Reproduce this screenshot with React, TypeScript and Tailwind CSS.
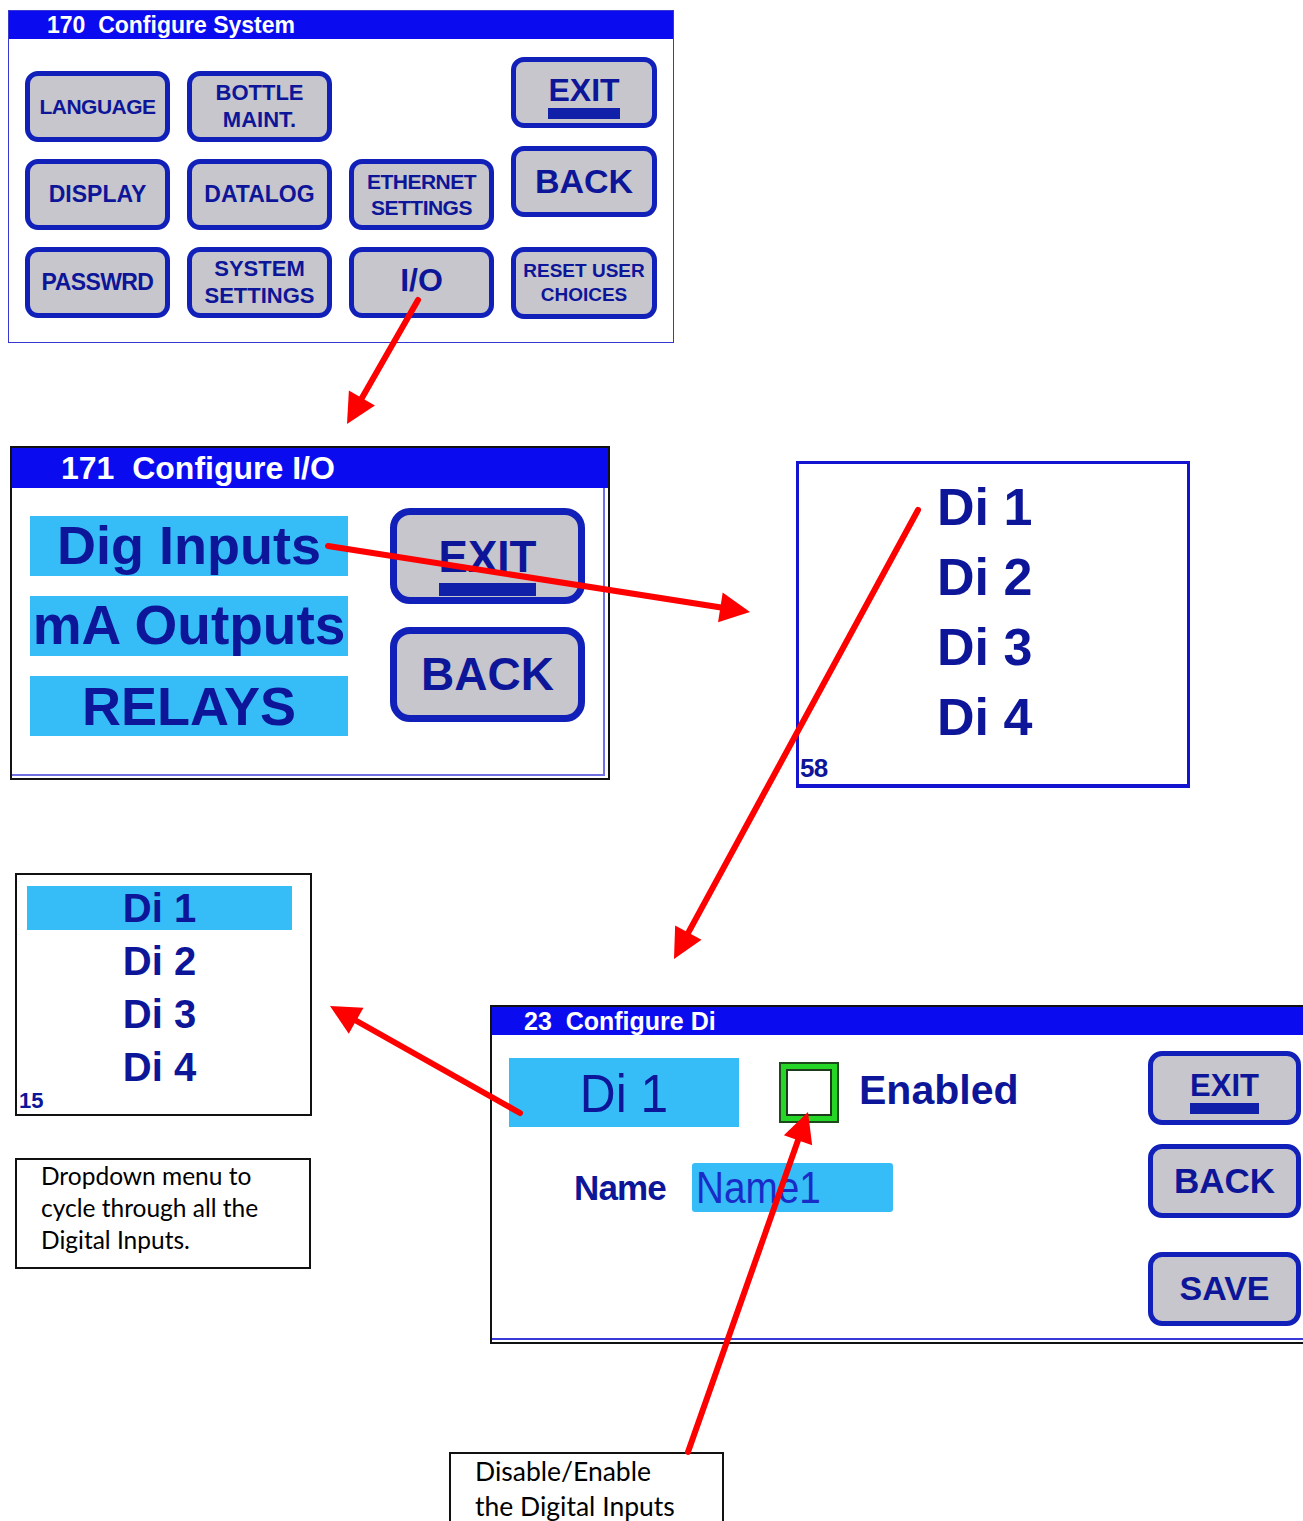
import React from "react";

const TEXT = "text-[#0d1598]";

function LcdButton({
  children,
  className = "",
}: {
  children: React.ReactNode;
  className?: string;
}) {
  return (
    <div
      className={`flex items-center justify-center border-[5px] border-[#1020b8] bg-[#c6c6cc] font-bold leading-[1.22] text-center ${TEXT} ${className}`}
    >
      {children}
    </div>
  );
}

function ExitLabel({ bar, gap = "mt-[3px]" }: { bar: string; gap?: string }) {
  return (
    <div className="flex flex-col items-center leading-none">
      <span>EXIT</span>
      <span className={`${gap} ${bar} w-full bg-[#1020a8]`} />
    </div>
  );
}

function Arrow({ x1, y1, x2, y2 }: { x1: number; y1: number; x2: number; y2: number }) {
  const dx = x2 - x1;
  const dy = y2 - y1;
  const len = Math.hypot(dx, dy);
  const ux = dx / len;
  const uy = dy / len;
  const hl = 30;
  const hw = 15;
  const bx = x2 - ux * hl;
  const by = y2 - uy * hl;
  const px = -uy * hw;
  const py = ux * hw;
  return (
    <g>
      <line
        x1={x1}
        y1={y1}
        x2={bx + ux * 4}
        y2={by + uy * 4}
        stroke="#ff0000"
        strokeWidth={6}
        strokeLinecap="round"
      />
      <polygon
        points={`${x2},${y2} ${bx + px},${by + py} ${bx - px},${by - py}`}
        fill="#ff0000"
      />
    </g>
  );
}

// 170 Configure System
function ConfigureSystem() {
  const cell = "h-[71px] w-[145px] rounded-[13px]";
  return (
    <div className="absolute left-[8px] top-[10px] h-[333px] w-[666px] border border-[#3838d0] bg-white">
      <div className="flex h-[28px] items-center bg-[#0b0bf0] pl-[38px] text-[23px] font-bold leading-none text-white">
        170&nbsp;&nbsp;Configure System
      </div>
      <div className="flex gap-[17px] pl-[16px]">
        <div className="flex flex-col gap-[17px] pt-[32px]">
          <LcdButton className={`${cell} text-[21px] tracking-tight`}>LANGUAGE</LcdButton>
          <LcdButton className={`${cell} text-[23px]`}>DISPLAY</LcdButton>
          <LcdButton className={`${cell} text-[23px] tracking-tight`}>PASSWRD</LcdButton>
        </div>
        <div className="flex flex-col gap-[17px] pt-[32px]">
          <LcdButton className={`${cell} text-[22px]`}>
            BOTTLE
            <br />
            MAINT.
          </LcdButton>
          <LcdButton className={`${cell} text-[23px]`}>DATALOG</LcdButton>
          <LcdButton className={`${cell} text-[22px]`}>
            SYSTEM
            <br />
            SETTINGS
          </LcdButton>
        </div>
        <div className="flex flex-col gap-[17px] pt-[32px]">
          <div className="h-[71px] w-[145px]" />
          <LcdButton className={`${cell} text-[21px] leading-[1.2] tracking-tight`}>
            ETHERNET
            <br />
            SETTINGS
          </LcdButton>
          <LcdButton className={`${cell} pb-[4px] text-[32px]`}>I/O</LcdButton>
        </div>
        <div className="flex flex-col pt-[18px]">
          <LcdButton className="h-[71px] w-[146px] rounded-[13px] pt-[8px] text-[32px]">
            <ExitLabel bar="h-[11px]" gap="mt-[2px]" />
          </LcdButton>
          <LcdButton className="mt-[18px] h-[71px] w-[146px] rounded-[13px] text-[34px]">
            BACK
          </LcdButton>
          <LcdButton className="mt-[30px] h-[72px] w-[146px] rounded-[13px] text-[19px] leading-[1.25]">
            RESET USER
            <br />
            CHOICES
          </LcdButton>
        </div>
      </div>
    </div>
  );
}

// 171 Configure I/O
function ConfigureIO() {
  const item = `flex h-[60px] w-[318px] items-center justify-center bg-[#36bdf7] text-[54px] font-bold leading-none ${TEXT}`;
  return (
    <div className="absolute left-[10px] top-[446px] h-[334px] w-[600px] border-2 border-[#111] bg-white">
      <div className="flex h-[40px] items-center bg-[#0b0bf0] pl-[49px] text-[32px] font-bold leading-none text-white">
        171&nbsp;&nbsp;Configure I/O
      </div>
      <div className="flex gap-[42px] pl-[18px] pt-[28px]">
        <div className="flex flex-col gap-[20px]">
          <div className={`${item} pb-[2px]`}>Dig Inputs</div>
          <div className={`${item} pb-[2px] text-[55px]`}>mA Outputs</div>
          <div className={item}>RELAYS</div>
        </div>
        <div className="flex flex-col gap-[23px]">
          <LcdButton className="-mt-[8px] h-[96px] w-[195px] rounded-[20px] border-[7px] pt-[18px] text-[44px]">
            <ExitLabel bar="h-[13px]" gap="mt-[4px]" />
          </LcdButton>
          <LcdButton className="h-[95px] w-[195px] rounded-[20px] border-[7px] text-[46px]">
            BACK
          </LcdButton>
        </div>
      </div>
      <div className="absolute bottom-[2px] right-[3px] top-[40px] w-[2px] bg-[#7070e0]" />
      <div className="absolute bottom-[2px] left-0 right-[3px] h-[2px] bg-[#7070e0]" />
    </div>
  );
}

// 58 list
function DiList() {
  return (
    <div className="absolute left-[796px] top-[461px] h-[327px] w-[394px] border-[3px] border-b-[4px] border-[#1414d0] bg-white">
      <div className={`flex flex-col pl-[138px] pt-[8px] text-[52px] font-bold leading-[70px] ${TEXT}`}>
        <span>Di 1</span>
        <span>Di 2</span>
        <span>Di 3</span>
        <span>Di 4</span>
      </div>
      <div className={`absolute bottom-[3px] left-[1px] text-[26px] font-bold leading-none tracking-tight ${TEXT}`}>
        58
      </div>
    </div>
  );
}

// 15 dropdown
function DiDropdown() {
  const rows = ["Di 1", "Di 2", "Di 3", "Di 4"];
  return (
    <div className="absolute left-[15px] top-[873px] h-[243px] w-[297px] border-2 border-[#111] bg-white">
      <div className={`flex flex-col px-[10px] pt-[6px] text-[40px] font-bold ${TEXT}`}>
        {rows.map((r, i) => (
          <div key={r} className="flex h-[53px] items-center">
            <div
              className={`flex h-[44px] w-[265px] items-center justify-center leading-none ${
                i === 0 ? "bg-[#36bdf7]" : ""
              }`}
            >
              {r}
            </div>
          </div>
        ))}
      </div>
      <div className={`absolute bottom-[2px] left-[2px] text-[22px] font-bold leading-none ${TEXT}`}>15</div>
    </div>
  );
}

function Note({ className, children }: { className: string; children: React.ReactNode }) {
  return (
    <div
      className={`absolute border-2 border-[#111] bg-white font-['Lato','Open_Sans',sans-serif] text-black ${className}`}
    >
      {children}
    </div>
  );
}

// 23 Configure Di
function ConfigureDi() {
  const btn = "h-[74px] w-[153px] rounded-[14px]";
  return (
    <div className="absolute left-[490px] top-[1005px] h-[339px] w-[830px] border-2 border-[#111] bg-white">
      <div className="flex h-[28px] items-center bg-[#0b0bf0] pl-[32px] text-[25px] font-bold leading-none text-white">
        23&nbsp;&nbsp;Configure Di
      </div>
      <div className="flex">
        <div className="flex w-[656px] flex-col pl-[17px] pt-[23px]">
          <div className="flex items-center">
            <div
              className={`flex h-[69px] w-[230px] items-center justify-center bg-[#36bdf7] text-[54px] leading-none ${TEXT}`}
            >
              <span className="scale-x-[0.92]">Di 1</span>
            </div>
            <div className="ml-[40px] flex h-[61px] w-[60px] items-center justify-center border-2 border-[#1d4a1d] bg-[#26d626]">
              <div className="h-[47px] w-[46px] border-2 border-[#1d3a1d] bg-white" />
            </div>
            <div className={`ml-[20px] pb-[4px] text-[41px] font-bold leading-none ${TEXT}`}>Enabled</div>
          </div>
          <div className="mt-[36px] flex items-center pl-[65px]">
            <div className={`text-[35px] font-bold leading-none tracking-tight ${TEXT}`}>Name</div>
            <div className="ml-[26px] flex h-[49px] w-[201px] items-center overflow-hidden rounded-[3px] bg-[#36bdf7] pl-[4px]">
              <span className="origin-left scale-x-[0.86] text-[45px] leading-none text-[#1a2cc8]">Name1</span>
            </div>
          </div>
        </div>
        <div className="flex flex-col pt-[16px]">
          <LcdButton className={`${btn} pt-[8px] text-[31px]`}>
            <ExitLabel bar="h-[11px]" gap="mt-[2px]" />
          </LcdButton>
          <LcdButton className={`${btn} mt-[19px] text-[35px]`}>BACK</LcdButton>
          <LcdButton className={`${btn} mt-[34px] text-[34px]`}>SAVE</LcdButton>
        </div>
      </div>
      <div className="absolute bottom-[2px] left-0 right-0 h-[2px] bg-[#3a3ad8]" />
    </div>
  );
}

export default function App() {
  return (
    <div className="relative h-[1521px] w-[1303px] overflow-hidden bg-white font-['Liberation_Sans',Arial,sans-serif]">
      <ConfigureSystem />
      <ConfigureIO />
      <DiList />
      <DiDropdown />
      <Note className="left-[15px] top-[1158px] h-[111px] w-[296px] pl-[24px] pt-0 text-[24.5px] leading-[32px]">
        Dropdown menu to
        <br />
        cycle through all the
        <br />
        Digital Inputs.
      </Note>
      <ConfigureDi />
      <Note className="left-[449px] top-[1452px] h-[90px] w-[275px] pl-[24px] pt-0 text-[26.5px] leading-[35px]">
        Disable/Enable
        <br />
        the Digital Inputs
      </Note>

      <svg className="pointer-events-none absolute inset-0" width={1303} height={1521}>
        <Arrow x1={418} y1={300} x2={347} y2={424} />
        <Arrow x1={328} y1={546} x2={750} y2={612} />
        <Arrow x1={918} y1={510} x2={674} y2={959} />
        <Arrow x1={520} y1={1113} x2={330} y2={1006} />
        <Arrow x1={688} y1={1452} x2={808} y2={1112} />
      </svg>
    </div>
  );
}
